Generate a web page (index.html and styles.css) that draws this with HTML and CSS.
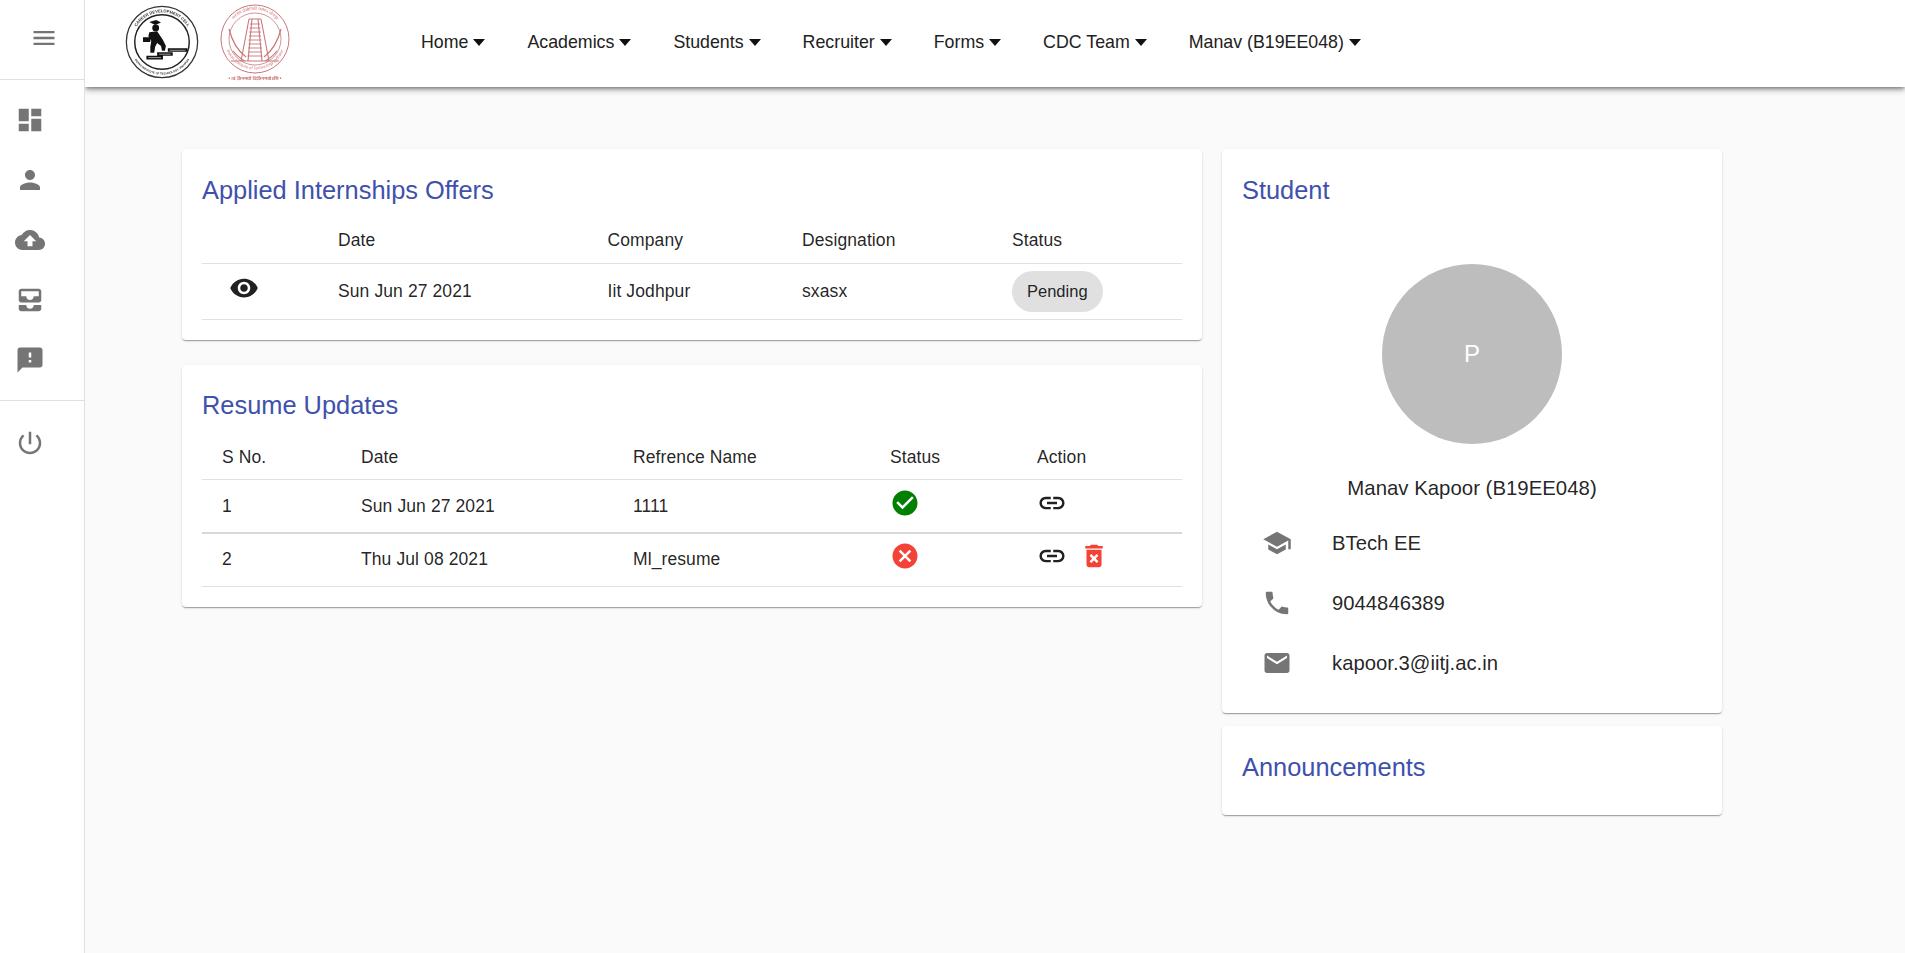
FILE: index.html
```html
<!DOCTYPE html>
<html lang="en">
<head>
<meta charset="utf-8">
<title>Dashboard</title>
<link rel="stylesheet" href="styles.css">
</head>
<body>
<aside class="sidebar">
  <div class="side-top">
    <svg class="menu-icon" viewBox="0 0 24 24"><path d="M3 18h18v-2H3v2zm0-5h18v-2H3v2zm0-7v2h18V6H3z"/></svg>
  </div>
  <nav class="side-list">
    <svg class="side-icon" viewBox="0 0 24 24"><path d="M3 13h8V3H3v10zm0 8h8v-6H3v6zm10 0h8V11h-8v10zm0-18v6h8V3h-8z"/></svg>
    <svg class="side-icon" viewBox="0 0 24 24"><path d="M12 12c2.21 0 4-1.79 4-4s-1.79-4-4-4-4 1.79-4 4 1.79 4 4 4zm0 2c-2.67 0-8 1.34-8 4v2h16v-2c0-2.66-5.33-4-8-4z"/></svg>
    <svg class="side-icon" viewBox="0 0 24 24"><path d="M19.35 10.04C18.67 6.59 15.64 4 12 4 9.11 4 6.6 5.64 5.35 8.04 2.34 8.36 0 10.91 0 14c0 3.31 2.69 6 6 6h13c2.76 0 5-2.24 5-5 0-2.64-2.05-4.78-4.65-4.96zM14 13v4h-4v-4H7l5-5 5 5h-3z"/></svg>
    <svg class="side-icon" viewBox="0 0 24 24"><path d="M19 3H5c-1.1 0-2 .9-2 2v7c0 1.1.9 2 2 2h14c1.1 0 2-.9 2-2V5c0-1.1-.9-2-2-2zm0 6h-4c0 1.62-1.38 3-3 3s-3-1.38-3-3H5V5h14v4zm-4 7h6v3c0 1.1-.9 2-2 2H5c-1.1 0-2-.9-2-2v-3h6c0 1.66 1.34 3 3 3s3-1.34 3-3z"/></svg>
    <svg class="side-icon" viewBox="0 0 24 24"><path d="M20 2H4c-1.1 0-1.99.9-1.99 2L2 22l4-4h14c1.1 0 2-.9 2-2V4c0-1.1-.9-2-2-2zm-7 12h-2v-2h2v2zm0-4h-2V6h2v4z"/></svg>
  </nav>
  <div class="side-list side-list-bottom">
    <svg class="side-icon" viewBox="0 0 24 24"><path d="M13 3h-2v10h2V3zm4.83 2.17l-1.42 1.42C17.99 7.86 19 9.81 19 12c0 3.87-3.13 7-7 7s-7-3.13-7-7c0-2.19 1.01-4.14 2.58-5.42L6.17 5.17C4.23 6.82 3 9.26 3 12c0 4.97 4.03 9 9 9s9-4.03 9-9c0-2.74-1.23-5.18-3.17-6.83z"/></svg>
  </div>
</aside>
<div class="main">
  <header class="topbar">
    <div class="logos">
      <svg class="logo-cdc" viewBox="0 0 76 76">
        <defs><path id="cdcArc" d="M7.500 38a30.500 30.500 0 0 1 61 0"/><path id="cdcArcB" d="M4.500 38a33.500 33.500 0 0 0 67 0"/></defs>
        <circle cx="38" cy="38" r="36.6" fill="#fff" stroke="#333" stroke-width="1.300"/>
        <circle cx="38" cy="38" r="28" fill="#fff" stroke="#222" stroke-width="1.500"/>
        <text class="logo-ring"><textPath href="#cdcArc" startOffset="50%" text-anchor="middle">CAREER DEVELOPMENT CELL</textPath></text>
        <text class="logo-ring logo-ring-small"><textPath href="#cdcArcB" startOffset="50%" text-anchor="middle">INDIAN INSTITUTE OF TECHNOLOGY JODHPUR</textPath></text>
        <path fill="#111" d="M25 17.500L32 15.500 37 18 31 20.500z"/>
        <circle cx="31.500" cy="23.500" r="3.500" fill="#111"/>
        <path fill="#111" d="M25 28L33 27 39 36 42 42 41 47 38 47 37 42 33 39 31 43 30 49 26 49 26 43 27 37 24 32z"/>
        <path fill="#111" d="M18.500 33H26V38H18.500zM22 52H39V56H22zM33 48.500H49V52H33zM44 44.500H64V48H44z"/>
        <path stroke="#fff" stroke-width=".6" fill="none" d="M24 54h13M35 50.500h12M46 46.500h16"/>
      </svg>
      <svg class="logo-iitj" viewBox="0 0 72 80">
        <defs><path id="iitArc" d="M7 36a29 29 0 0 1 58 0"/><path id="iitArcB" d="M5.500 36a30.500 30.500 0 0 0 61 0"/></defs>
        <g fill="none" stroke="#c9777c">
          <circle cx="36" cy="36" r="34" stroke-width="1"/>
          <circle cx="36" cy="36" r="26" stroke-width=".8"/>
          <path stroke-width="1.100" d="M30 16L22 58M42 16L50 58M33 16L29 58M39 16L43 58M30 16h12"/>
          <path stroke-width=".9" d="M31 21h10M30.500 25h11M30 29h12M30 33h12M29.500 37h13M29.500 41h13M29 45h14M29 49h14M28.500 53h15"/>
          <path stroke-width="1.200" d="M10 26c3 12 9 22 17 28M62 26c-3 12-9 22-17 28M14 48c4 5 8 8 12 10M58 48c-4 5-8 8-12 10M12 58h48"/>
        </g>
        <text class="logo-ring logo-ring-red"><textPath href="#iitArc" startOffset="50%" text-anchor="middle">भारतीय प्रौद्योगिकी संस्थान जोधपुर</textPath></text>
        <text class="logo-ring logo-ring-red"><textPath href="#iitArcB" startOffset="50%" text-anchor="middle">Indian Institute of Technology Jodhpur</textPath></text>
        <text class="logo-motto" x="36" y="77" text-anchor="middle">• त्वं ज्ञानमयो विज्ञानमयोऽसि •</text>
      </svg>
    </div>
    <nav class="topnav">
      <a class="nav-item">Home<span class="caret"></span></a>
      <a class="nav-item">Academics<span class="caret"></span></a>
      <a class="nav-item">Students<span class="caret"></span></a>
      <a class="nav-item">Recruiter<span class="caret"></span></a>
      <a class="nav-item">Forms<span class="caret"></span></a>
      <a class="nav-item">CDC Team<span class="caret"></span></a>
      <a class="nav-item">Manav (B19EE048)<span class="caret"></span></a>
    </nav>
  </header>
  <main class="content">
    <div class="col col-left">
      <section class="card card-offers">
        <h2 class="card-title">Applied Internships Offers</h2>
        <table class="data offers">
          <thead><tr><th></th><th>Date</th><th>Company</th><th>Designation</th><th>Status</th></tr></thead>
          <tbody>
            <tr>
              <td class="eye-cell"><svg class="icon-eye" viewBox="0 0 24 24"><path d="M12 4.5C7 4.5 2.73 7.61 1 12c1.73 4.39 6 7.5 11 7.5s9.27-3.11 11-7.5c-1.730-4.39-6-7.5-11-7.5zM12 17c-2.76 0-5-2.24-5-5s2.24-5 5-5 5 2.240 5 5-2.24 5-5 5zm0-8c-1.66 0-3 1.34-3 3s1.34 3 3 3 3-1.34 3-3-1.34-3-3-3z"/></svg></td>
              <td>Sun Jun 27 2021</td><td>Iit Jodhpur</td><td>sxasx</td>
              <td><span class="chip">Pending</span></td>
            </tr>
          </tbody>
        </table>
      </section>
      <section class="card card-resume">
        <h2 class="card-title">Resume Updates</h2>
        <table class="data resume">
          <thead><tr><th>S No.</th><th>Date</th><th>Refrence Name</th><th>Status</th><th>Action</th></tr></thead>
          <tbody>
            <tr class="row-strong">
              <td>1</td><td>Sun Jun 27 2021</td><td>1111</td>
              <td><svg class="icon icon-ok" viewBox="0 0 24 24"><path d="M12 2C6.48 2 2 6.48 2 12s4.48 10 10 10 10-4.48 10-10S17.52 2 12 2zm-2 15l-5-5 1.41-1.41L10 14.17l7.59-7.59L19 8l-9 9z"/></svg></td>
              <td><svg class="icon icon-link" viewBox="0 0 24 24"><path d="M3.9 12c0-1.71 1.39-3.1 3.1-3.1h4V7H7c-2.76 0-5 2.24-5 5s2.24 5 5 5h4v-1.9H7c-1.71 0-3.1-1.39-3.1-3.1zM8 13h8v-2H8v2zm9-6h-4v1.9h4c1.71 0 3.1 1.39 3.1 3.1s-1.39 3.1-3.1 3.1h-4V17h4c2.76 0 5-2.24 5-5s-2.24-5-5-5z"/></svg></td>
            </tr>
            <tr class="row-last">
              <td>2</td><td>Thu Jul 08 2021</td><td>Ml_resume</td>
              <td><svg class="icon icon-bad" viewBox="0 0 24 24"><path d="M12 2C6.47 2 2 6.47 2 12s4.47 10 10 10 10-4.47 10-10S17.53 2 12 2zm5 13.59L15.59 17 12 13.41 8.41 17 7 15.59 10.59 12 7 8.41 8.41 7 12 10.59 15.59 7 17 8.41 13.41 12 17 15.59z"/></svg></td>
              <td class="action-cell"><svg class="icon icon-link" viewBox="0 0 24 24"><path d="M3.9 12c0-1.71 1.39-3.1 3.1-3.1h4V7H7c-2.76 0-5 2.24-5 5s2.24 5 5 5h4v-1.9H7c-1.71 0-3.1-1.39-3.1-3.1zM8 13h8v-2H8v2zm9-6h-4v1.9h4c1.71 0 3.1 1.39 3.1 3.1s-1.39 3.1-3.1 3.1h-4V17h4c2.76 0 5-2.24 5-5s-2.24-5-5-5z"/></svg><svg class="icon icon-del" viewBox="0 0 24 24"><path d="M6 19c0 1.1.9 2 2 2h8c1.1 0 2-.9 2-2V7H6v12zm2.46-7.12l1.41-1.41L12 12.59l2.12-2.12 1.41 1.41L13.41 14l2.12 2.12-1.41 1.41L12 15.41l-2.12 2.12-1.41-1.41L10.59 14l-2.13-2.12zM15.5 4l-1-1h-5l-1 1H5v2h14V4z"/></svg></td>
            </tr>
          </tbody>
        </table>
      </section>
    </div>
    <div class="col col-right">
      <section class="card card-student">
        <h2 class="card-title">Student</h2>
        <div class="profile">
          <div class="avatar">P</div>
          <div class="profile-name">Manav Kapoor (B19EE048)</div>
        </div>
        <ul class="info">
          <li class="info-row"><svg class="info-icon" viewBox="0 0 24 24"><path d="M5 13.18v4L12 21l7-3.82v-4L12 17l-7-3.82zM12 3L1 9l11 6 9-4.91V17h2V9L12 3z"/></svg><span>BTech EE</span></li>
          <li class="info-row"><svg class="info-icon" viewBox="0 0 24 24"><path d="M6.62 10.79c1.44 2.83 3.76 5.14 6.59 6.59l2.2-2.2c.27-.27.67-.36 1.02-.24 1.12.37 2.33.57 3.57.57.55 0 1 .45 1 1V20c0 .55-.45 1-1 1-9.39 0-17-7.61-17-17 0-.55.45-1 1-1h3.5c.55 0 1 .45 1 1 0 1.25.2 2.45.57 3.57.11.35.03.74-.25 1.02l-2.2 2.2z"/></svg><span>9044846389</span></li>
          <li class="info-row"><svg class="info-icon" viewBox="0 0 24 24"><path d="M20 4H4c-1.1 0-1.99.9-1.99 2L2 18c0 1.1.9 2 2 2h16c1.1 0 2-.9 2-2V6c0-1.1-.9-2-2-2zm0 4l-8 5-8-5V6l8 5 8-5v2z"/></svg><span>kapoor.3@iitj.ac.in</span></li>
        </ul>
      </section>
      <section class="card card-announce">
        <h2 class="card-title">Announcements</h2>
      </section>
    </div>
  </main>
</div>
</body>
</html>
```
FILE: styles.css
```css
* { box-sizing: border-box; }
html, body { margin: 0; height: 100%; }
body {
  display: flex;
  height: 953px;
  overflow: hidden;
  background: #fafafa;
  font-family: "Liberation Sans", Arial, sans-serif;
  color: rgba(0,0,0,.87);
}
.sidebar {
  width: 85px;
  flex: none;
  background: #fff;
  border-right: 1px solid rgba(0,0,0,.12);
  position: relative;
  z-index: 2;
}
.side-top {
  height: 80px;
  display: flex;
  align-items: center;
  justify-content: center;
  padding-left: 2px;
  border-bottom: 1px solid rgba(0,0,0,.12);
}
.menu-icon { width: 28px; height: 28px; fill: #757575; margin-left: 2px; margin-bottom: 3px; }
.side-list {
  display: flex;
  flex-direction: column;
  align-items: flex-start;
  gap: 30px;
  padding: 25px 0 0 15px;
  height: 321px;
  border-bottom: 1px solid rgba(0,0,0,.12);
}
.side-list-bottom { border-bottom: 0; padding-top: 27px; height: auto; }
.side-icon { width: 30px; height: 30px; fill: #757575; display: block; flex: none; }
.main { flex: 1; min-width: 0; display: flex; flex-direction: column; }
.topbar {
  height: 87px;
  flex: none;
  display: flex;
  align-items: flex-start;
  background: #fff;
  box-shadow: 0 2px 4px -1px rgba(0,0,0,.45), 0 4px 5px 0 rgba(0,0,0,.14), 0 1px 10px 0 rgba(0,0,0,.12);
  position: relative;
}
.logos { display: flex; align-items: flex-start; gap: 20px; padding: 3px 0 0 40px; width: 336px; }
.logo-cdc { width: 74px; height: 74px; display: block; margin-top: 2px; filter: blur(.45px); }
.logo-iitj { width: 72px; height: 80px; display: block; filter: blur(.45px); }
.logo-ring { font: 700 4.200px "Liberation Sans", sans-serif; fill: #333; }
.logo-ring-small { font-size: 2.900px; }
.logo-ring-red { fill: #c9777c; font: 400 4px "Noto Sans", "Liberation Sans", sans-serif; }
.logo-motto { fill: #c9777c; font: 700 4.600px "Noto Sans", "Liberation Sans", sans-serif; }
.topnav { display: flex; gap: 42px; padding-top: 32px; }
.nav-item {
  display: flex;
  align-items: center;
  font-size: 17.800px;
  line-height: 20px;
  color: #212121;
  white-space: nowrap;
}
.caret {
  margin-left: 5px;
  width: 0; height: 0;
  border-left: 6px solid transparent;
  border-right: 6px solid transparent;
  border-top: 7px solid #111;
}
.content {
  flex: 1;
  display: flex;
  align-items: flex-start;
  gap: 20px;
  padding: 62px 0 0 97px;
}
.col { display: flex; flex-direction: column; }
.col-left { width: 1020px; gap: 25px; }
.col-right { width: 500px; gap: 13px; }
.card {
  background: #fff;
  border-radius: 4px;
  padding: 25px 20px 20px;
  box-shadow: 0 2px 1px -1px rgba(0,0,0,.2), 0 1px 1px 0 rgba(0,0,0,.14), 0 1px 3px 0 rgba(0,0,0,.12);
}
.card-offers { height: 191px; }
.card-resume { height: 242px; padding-top: 24px; }
.card-student { height: 564px; }
.card-announce { height: 89px; }
.card-title {
  margin: 0;
  font-size: 25.400px;
  font-weight: 400;
  line-height: 32px;
  color: #4051ad;
}
.data { width: 100%; border-collapse: collapse; table-layout: fixed; margin-top: 12px; }
.data th, .data td {
  font-size: 17.500px;
  font-weight: 400;
  letter-spacing: .1px;
  text-align: left;
  padding: 0;
  border-bottom: 1px solid #e0e0e0;
}
.data th { height: 45px; color: rgba(0,0,0,.87); }
.data td { height: 56px; }
.offers th:nth-child(1) { width: 136px; }
.offers th:nth-child(2) { width: 269.500px; }
.offers th:nth-child(3) { width: 194.500px; }
.offers th:nth-child(4) { width: 210px; }
.resume th { height: 46px; padding-top: 3px; }
.resume th:nth-child(1) { width: 159px; padding-left: 20px; }
.resume td:nth-child(1) { padding-left: 20px; }
.resume th:nth-child(2) { width: 272px; }
.resume th:nth-child(3) { width: 257px; }
.resume th:nth-child(4) { width: 147px; }
.resume td { height: 53px; }
.resume .row-strong td { border-bottom: 2px solid #d8d8d8; height: 54px; padding-top: 1px; }
.resume .row-strong .icon { margin-top: -7px; }
.eye-cell { padding-left: 27px !important; }
.icon-eye { width: 30px; height: 30px; fill: #212121; display: block; margin-top: -6px; }
.chip {
  display: inline-flex;
  align-items: center;
  height: 41px;
  padding: 0 15px;
  border-radius: 21px;
  background: #e0e0e0;
  font-size: 16.500px;
  letter-spacing: 0;
  color: rgba(0,0,0,.87);
}
.icon { width: 30px; height: 30px; display: block; margin-top: -6px; }
.row-last .icon { margin-top: -7px; }
.icon-ok { fill: green; }
.icon-bad { fill: #f44336; }
.icon-link { fill: #212121; }
.icon-del { fill: #f44336; margin-left: 12px; }
.action-cell > svg { display: inline-block; vertical-align: middle; }
.profile { display: flex; flex-direction: column; align-items: center; padding-top: 58px; }
.avatar {
  width: 180px;
  height: 180px;
  border-radius: 50%;
  background: #bdbdbd;
  color: #fff;
  font-size: 24px;
  display: flex;
  align-items: center;
  justify-content: center;
}
.profile-name { margin-top: 30px; font-size: 20.400px; line-height: 28px; color: rgba(0,0,0,.87); }
.info { list-style: none; margin: 26px 0 0; padding: 0 0 0 20px; display: flex; flex-direction: column; gap: 30px; }
.info-row { display: flex; align-items: center; gap: 40px; font-size: 20.300px; height: 30px; line-height: 30px; }
.info-icon { width: 30px; height: 30px; fill: #757575; flex: none; }
```
